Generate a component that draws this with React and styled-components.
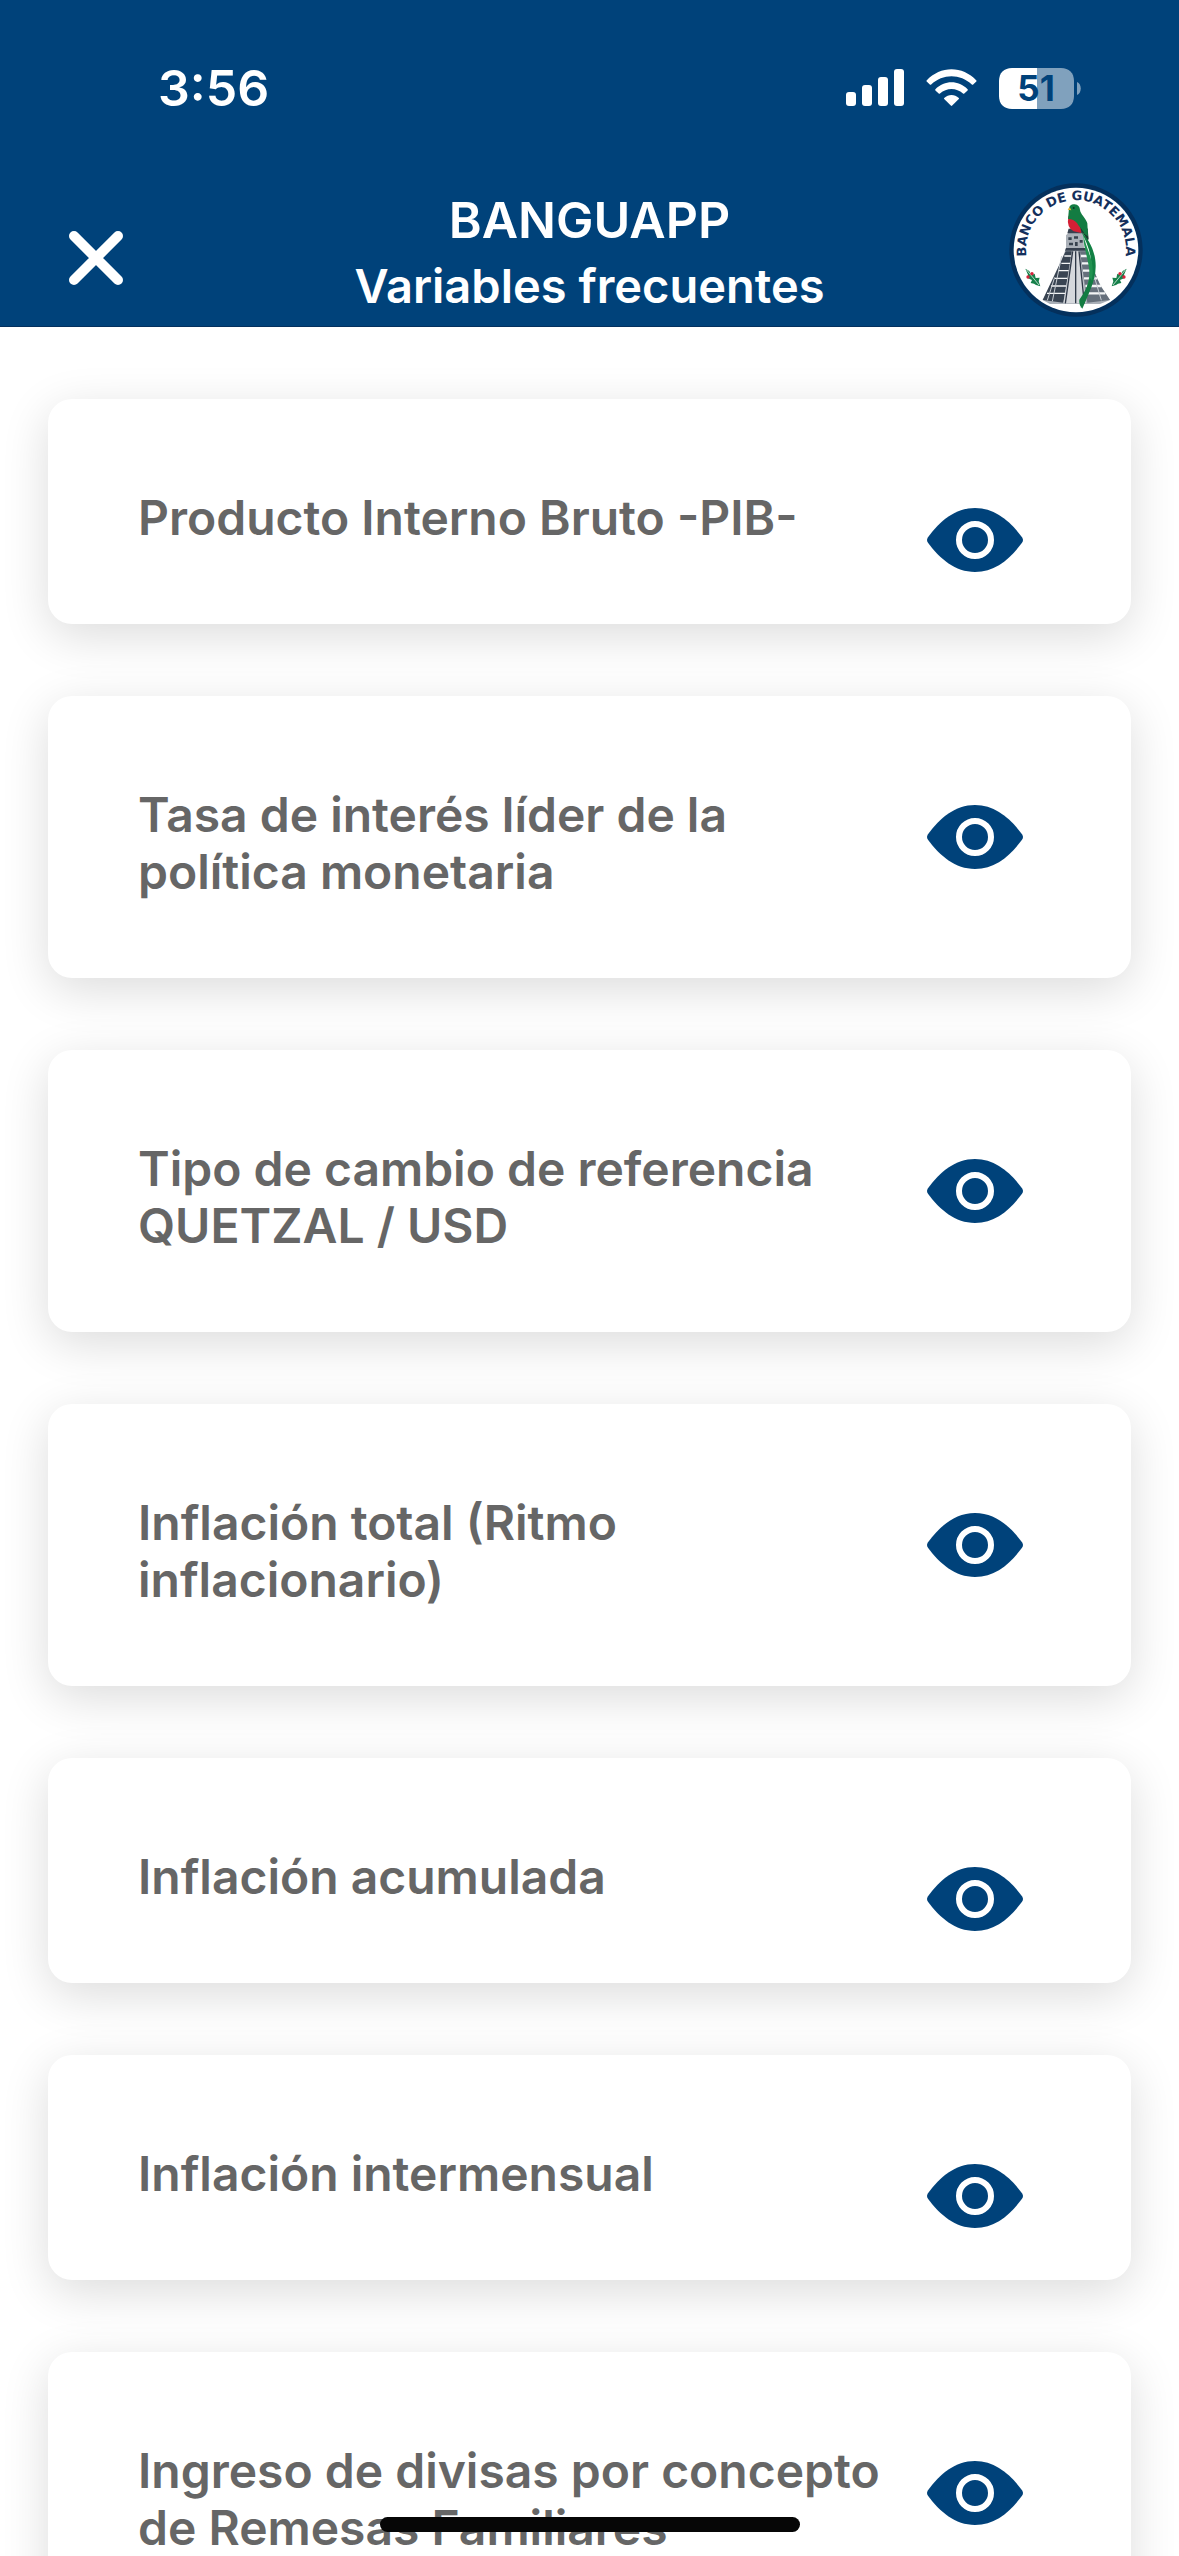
import React from "react";
import styled, { createGlobalStyle } from "styled-components";

const navy = "#00427a";

const GlobalStyle = createGlobalStyle`
  * { box-sizing: border-box; }
  body { margin: 0; background: #fff; font-family: Inter, "Liberation Sans", sans-serif; }
`;

const Screen = styled.div`
  display: flex;
  flex-direction: column;
  height: 100vh;
  overflow: hidden;
`;

const TopArea = styled.div`
  flex: none;
  background: ${navy};
  color: #fff;
  border-bottom: 1px solid #03305e;
`;

const StatusBar = styled.div`
  display: flex;
  align-items: center;
  justify-content: space-between;
  height: 176px;
  padding: 0 98px 0 158px;
`;

const Time = styled.time`
  font-size: 50px;
  line-height: 60px;
  font-weight: 600;
`;

const StatusIcons = styled.div`
  display: flex;
  align-items: center;
  gap: 22px;
`;

const TitleBar = styled.header`
  display: grid;
  grid-template-columns: 1fr auto 1fr;
  height: 150px;
  padding: 0 36px;
`;

const CloseButton = styled.button`
  justify-self: start;
  align-self: center;
  margin: 14px 0 0 24px;
  padding: 0;
  border: 0;
  background: none;
  color: #fff;
  svg { display: block; }
`;

const Titles = styled.div`
  padding-top: 11px;
  text-align: center;
`;

const AppName = styled.div`
  font-size: 50px;
  line-height: 66px;
  font-weight: 600;
`;

const PageTitle = styled.h1`
  margin: 0;
  font-size: 47px;
  line-height: 66px;
  font-weight: 600;
`;

const LogoWrap = styled.div`
  justify-self: end;
  padding-top: 7px;
  svg { display: block; }
`;

const List = styled.ul`
  flex: 1;
  min-height: 0;
  margin: 0;
  padding: 72px 48px;
  list-style: none;
  overflow-y: auto;
  scrollbar-width: none;
`;

const Card = styled.li`
  display: flex;
  align-items: flex-start;
  justify-content: space-between;
  margin-bottom: 72px;
  padding: 0 108px 0 90px;
  border-radius: 24px;
  background: #fff;
  box-shadow: 0 12px 48px rgba(0, 0, 0, 0.14);
`;

const Label = styled.h2`
  flex: 1;
  margin: 0;
  padding: 90px 36px 78px 0;
  color: #666;
  font-size: 48px;
  line-height: 57px;
  font-weight: 600;
`;

const EyeButton = styled.button`
  flex: none;
  margin-top: 93px;
  padding: 0;
  border: 0;
  background: none;
  color: ${navy};
  svg { display: block; }
`;

const HomeIndicator = styled.div`
  position: fixed;
  bottom: 24px;
  left: 50%;
  width: 420px;
  height: 15px;
  margin-left: -210px;
  border-radius: 8px;
  background: #060606;
`;

const Signal = () => (
  <svg width="58" height="38" viewBox="0 0 58 38" fill="#fff" aria-hidden="true">
    <rect x="0" y="23" width="10" height="14" rx="3" />
    <rect x="16" y="16" width="10" height="21" rx="3" />
    <rect x="32" y="8" width="10" height="29" rx="3" />
    <rect x="48" y="0" width="10" height="37" rx="3" />
  </svg>
);

const Wifi = () => (
  <svg width="51" height="38" viewBox="0 0 51 38" aria-hidden="true">
    <path d="M0.6 11.4C14.5 -3.6 36.5 -3.6 50.4 11.4Q50.8 12 50.3 12.6L47.2 15.5Q46.5 16 45.8 15.4C34.3 4.4 16.7 4.4 5.2 15.4Q4.5 16 3.8 15.5L0.7 12.6Q0.2 12 0.6 11.4Z" fill="#fff" />
    <path d="M9.4 20.2C18.5 10.9 32.5 10.9 41.6 20.2Q42.1 20.8 41.6 21.4L38.3 24.5Q37.7 25 37 24.5C30.4 18.4 20.6 18.4 14 24.5Q13.3 25 12.7 24.5L9.4 21.4Q8.9 20.8 9.4 20.2Z" fill="#fff" />
    <path d="M18.2 28.9C22.5 25 28.5 25 32.8 28.9Q33.3 29.5 32.8 30.1L26.2 36.6Q25.5 37.2 24.8 36.6L18.2 30.1Q17.7 29.5 18.2 28.9Z" fill="#fff" />
  </svg>
);

const Battery = () => (
  <svg width="82" height="41" viewBox="0 0 82 41" role="img" aria-label="Batería 51 %">
    <path d="M13 0H38V41H13C5 41 0 36 0 28V13C0 5 5 0 13 0Z" fill="#fff" />
    <path d="M38 0H62C70 0 75 5 75 13V28C75 36 70 41 62 41H38Z" fill="#80a1bd" />
    <path d="M78 14C83 16 83 25 78 27Z" fill="#80a1bd" />
    <text x="37" y="33" textAnchor="middle" fontFamily="Inter, sans-serif" fontSize="35" fontWeight="700" fill={navy}>51</text>
  </svg>
);

const Eye = () => (
  <svg width="96" height="96" viewBox="0 0 96 96" aria-hidden="true">
    <path d="M1 45.2C13 29 28 16 48 16S83 29 95 45.2Q97 48 95 50.8C83 67 68 80 48 80S13 67 1 50.8Q-1 48 1 45.2Z" fill="currentColor" />
    <circle cx="48" cy="48" r="16" fill="none" stroke="#fff" strokeWidth="6" />
  </svg>
);

const Sprig = ({ flip }) => (
  <g transform={flip ? "translate(456 0) scale(-1 1)" : undefined}>
    <path d="M76 296L88 303L94 316L104 311L107 324L119 323L116 334L121 349L108 345L102 341L92 339L96 330L82 324L84 314Z" fill="#16804a" />
    <path d="M80 300L117 345" stroke="#fff" strokeWidth="2" />
    <circle cx="96" cy="311" r="5" fill="#d6213b" />
    <circle cx="84" cy="321" r="5" fill="#d6213b" />
  </g>
);

const Logo = () => (
  <svg width="134" height="134" viewBox="27 39 402 402" role="img" aria-label="Banco de Guatemala">
    <circle cx="228" cy="240" r="200" fill="#04305c" />
    <circle cx="228" cy="240" r="187" fill="#fff" />
    <path id="arc" d="M93 306A150 150 0 1 1 363 306" fill="none" />
    <text fontFamily="DejaVu Sans, sans-serif" fontSize="39" fontWeight="700" fill="#142f5c" textAnchor="middle">
      <textPath href="#arc" startOffset="50%">BANCO DE GUATEMALA</textPath>
    </text>
    <path d="M206 176H249L252 234H258L264 252L272 276L282 302L292 327L306 354L330 390L300 402H150L128 390L146 356L160 327L172 302L182 276L192 252L198 234V196L204 190Z" fill="#aab0b8" />
    <path d="M206 176H246L250 190H202ZM198 234H258L261 242H195Z" fill="#37414f" />
    <path d="M197 244H215L190 398L128 390Z" fill="#394452" />
    <path d="M240 244H259L282 302L300 345L330 390L262 398Z" fill="#66707c" />
    <path d="M193 258H213M184 280H210M175 302H206M165 325H202M153 348H198M141 370H195" stroke="#f4f5f6" strokeWidth="4" fill="none" />
    <path d="M243 258H262M246 280H272M249 302H282M252 325H292M256 348H304M259 370H316" stroke="#f4f5f6" strokeWidth="7" fill="none" />
    <path d="M185 258L157 394M164 322L142 391M274 290L304 391" stroke="#c9ced4" strokeWidth="3" />
    <path d="M217 244H239L258 400H190Z" fill="#d5d8dc" />
    <path d="M218 244L196 400M227 244V400M237 244L253 400" stroke="#2f3948" strokeWidth="4" />
    <path d="M205 202h10v8h-10zM222 199h12v7h-12zM239 210h9v8h-9zM207 218h12v8h-12zM225 216h8v12h-8z" fill="#38434f" />
    <path d="M237 170L262 211L266 208L263 178L247 142Z" fill="#18372d" />
    <path d="M205 139Q199 174 221 184L244 189L239 163L223 139Z" fill="#d51f35" />
    <path d="M207 114Q211 101 224 103Q239 105 240 120C241 132 258 145 262 160L264 199L253 192C250 181 239 173 231 159Q219 146 204 147Q206 128 207 114Z" fill="#137c42" />
    <path d="M209 111L203 119L214 121Z" fill="#e5b733" />
    <circle cx="221" cy="114" r="3" fill="#0b3a23" />
    <path d="M244 185C267 208 288 246 287 290C286 337 267 367 242 414C249 373 273 342 274 291C275 251 260 216 244 185Z" fill="#128044" />
    <path d="M250 190C254 229 281 263 278 310C276 340 263 361 257 384L252 379C263 344 271 323 267 294C262 257 249 228 250 190Z" fill="#219250" />
    <path d="M270 324Q261 358 238 389Q236 404 247 416Q268 370 278 337Z" fill="#137c42" />
    <Sprig />
    <Sprig flip />
  </svg>
);

const variables = [
  "Producto Interno Bruto -PIB-",
  "Tasa de interés líder de la política monetaria",
  "Tipo de cambio de referencia QUETZAL / USD",
  "Inflación total (Ritmo inflacionario)",
  "Inflación acumulada",
  "Inflación intermensual",
  "Ingreso de divisas por concepto de Remesas Familiares",
];

export default function App() {
  return (
    <Screen>
      <GlobalStyle />
      <TopArea>
        <StatusBar>
          <Time>3:56</Time>
          <StatusIcons>
            <Signal />
            <Wifi />
            <Battery />
          </StatusIcons>
        </StatusBar>
        <TitleBar>
          <CloseButton aria-label="Cerrar">
            <svg width="72" height="72" viewBox="0 0 72 72" aria-hidden="true">
              <path d="M14 14L58 58M58 14L14 58" stroke="currentColor" strokeWidth="10" strokeLinecap="round" />
            </svg>
          </CloseButton>
          <Titles>
            <AppName>BANGUAPP</AppName>
            <PageTitle>Variables frecuentes</PageTitle>
          </Titles>
          <LogoWrap>
            <Logo />
          </LogoWrap>
        </TitleBar>
      </TopArea>
      <List>
        {variables.map((name) => (
          <Card key={name}>
            <Label>{name}</Label>
            <EyeButton aria-label={`Ver ${name}`}>
              <Eye />
            </EyeButton>
          </Card>
        ))}
      </List>
      <HomeIndicator />
    </Screen>
  );
}
